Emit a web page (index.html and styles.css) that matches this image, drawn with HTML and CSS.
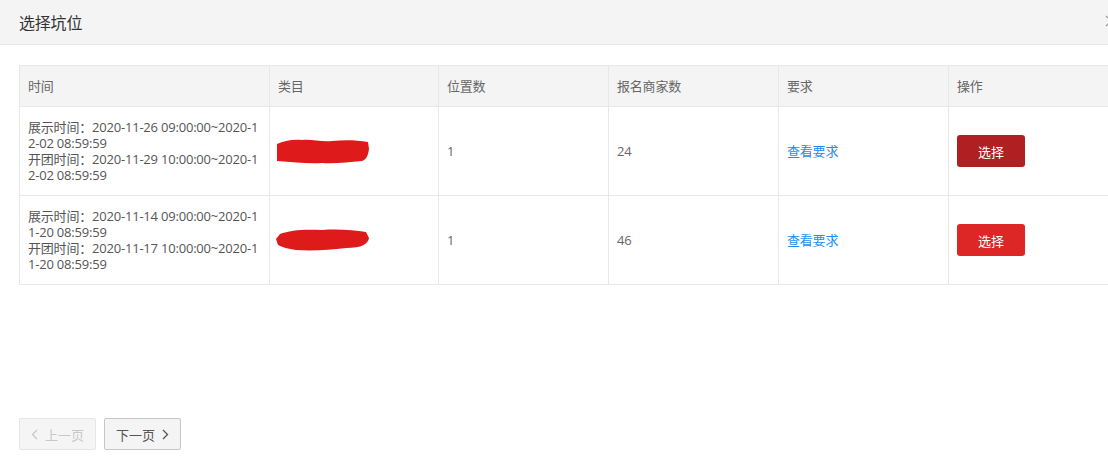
FILE: index.html
```html
<!DOCTYPE html>
<html lang="zh-CN">
<head>
<meta charset="utf-8">
<title>选择坑位</title>
<link rel="stylesheet" href="styles.css">
</head>
<body>
<div class="modal">
  <div class="modal-head">
    <span class="modal-title">选择坑位</span>
    <svg class="modal-close" width="12" height="12" viewBox="0 0 12 12"><path d="M1 1 L11 11 M11 1 L1 11" stroke="#999" stroke-width="1.2" fill="none"/></svg>
  </div>
  <div class="modal-body">
    <table class="grid">
      <colgroup>
        <col class="c-time"><col class="c-cat"><col class="c-n"><col class="c-n"><col class="c-n"><col class="c-n">
      </colgroup>
      <thead>
        <tr><th>时间</th><th>类目</th><th>位置数</th><th>报名商家数</th><th>要求</th><th>操作</th></tr>
      </thead>
      <tbody>
        <tr>
          <td class="time">
            <span class="ln">展示时间：2020-11-26 09:00:00~2020-1</span>
            <span class="ln">2-02 08:59:59</span>
            <span class="ln">开团时间：2020-11-29 10:00:00~2020-1</span>
            <span class="ln">2-02 08:59:59</span>
          </td>
          <td class="cat">
            <svg class="scribble" width="94" height="28" viewBox="0 0 94 28"><path d="M1 7 C8 4 16 2 26 3 C36 2 44 5 56 4 C68 3 80 3 92 5 L93 12 C92 18 91 22 86 24 C72 25 60 27 46 26 C32 27 18 25 1 24 Z" fill="#df1a1a"/></svg>
          </td>
          <td>1</td>
          <td>24</td>
          <td><a class="link" href="#">查看要求</a></td>
          <td><button class="btn btn-active">选择</button></td>
        </tr>
        <tr>
          <td class="time">
            <span class="ln">展示时间：2020-11-14 09:00:00~2020-1</span>
            <span class="ln">1-20 08:59:59</span>
            <span class="ln">开团时间：2020-11-17 10:00:00~2020-1</span>
            <span class="ln">1-20 08:59:59</span>
          </td>
          <td class="cat">
            <svg class="scribble" width="94" height="24" viewBox="0 0 94 24"><path d="M4 6 C14 2 28 1 46 2 C62 1 78 2 90 4 L93 10 C92 16 86 20 70 20 C54 22 36 23 20 22 C12 21 6 19 2 17 L0 11 Z" fill="#df1a1a"/></svg>
          </td>
          <td>1</td>
          <td>46</td>
          <td><a class="link" href="#">查看要求</a></td>
          <td><button class="btn">选择</button></td>
        </tr>
      </tbody>
    </table>
    <div class="pager">
      <button class="pg pg-disabled">
        <svg width="7" height="11" viewBox="0 0 7 11"><path d="M6 1 L1.5 5.5 L6 10" stroke="currentColor" stroke-width="1.3" fill="none"/></svg>
        <span>上一页</span>
      </button>
      <button class="pg">
        <span>下一页</span>
        <svg width="7" height="11" viewBox="0 0 7 11"><path d="M1 1 L5.5 5.5 L1 10" stroke="currentColor" stroke-width="1.3" fill="none"/></svg>
      </button>
    </div>
  </div>
</div>
</body>
</html>
```
FILE: styles.css
```css
html, body {
  margin: 0;
  padding: 0;
  background: #fff;
  overflow: hidden;
}
body {
  font-family: "Open Sans", "Noto Sans CJK SC", sans-serif;
  color: #666;
}
.modal {
  width: 1140px;
  background: #fff;
}
.modal-head {
  height: 44px;
  background: #f4f4f4;
  border-bottom: 1px solid #e9e9e9;
  display: flex;
  align-items: center;
  padding: 0 23px 0 19px;
}
.modal-title {
  font-size: 16px;
  color: #333;
  letter-spacing: -0.2px;
}
.modal-close {
  margin-left: auto;
  margin-top: -2px;
}
.modal-body {
  padding: 20px 19px 0 19px;
}
.grid {
  border-collapse: collapse;
  table-layout: fixed;
  width: 1100px;
  font-size: 13px;
  letter-spacing: -0.2px;
}
.c-time { width: 250px; }
.c-cat { width: 169px; }
.c-n { width: 170px; }
.grid th, .grid td {
  border: 1px solid #e8e8e8;
  text-align: left;
  vertical-align: middle;
  padding: 12px 8px;
  line-height: 16px;
}
.grid th {
  background: #f4f4f4;
  font-weight: normal;
  color: #666;
}
.grid td {
  color: #666;
}
.grid td.time {
  padding-top: 12px;
  padding-bottom: 12px;
  color: #555;
}
.ln {
  display: block;
  white-space: nowrap;
}
.grid td.cat {
  padding-left: 6px;
}
.scribble {
  display: block;
}
.link {
  color: #1a8ff0;
  text-decoration: none;
}
.btn {
  width: 68px;
  height: 32px;
  border: none;
  border-radius: 3px;
  background: #dd2727;
  color: #fff;
  font-family: "Noto Sans CJK SC", sans-serif;
  font-size: 13px;
  padding: 0;
  display: block;
}
.btn-active {
  background: #b01f22;
}
.pager {
  margin-top: 133px;
  display: flex;
  gap: 8px;
}
.pg {
  width: 77px;
  height: 32px;
  border: 1px solid #c6c6c6;
  border-radius: 2px;
  background: #f4f4f4;
  color: #555;
  font-family: "Noto Sans CJK SC", sans-serif;
  font-size: 13px;
  padding: 0;
  display: flex;
  align-items: center;
  justify-content: center;
  gap: 7px;
}
.pg-disabled {
  background: #f5f5f5;
  border-color: #e6e6e6;
  color: #c8c8c8;
}
```
